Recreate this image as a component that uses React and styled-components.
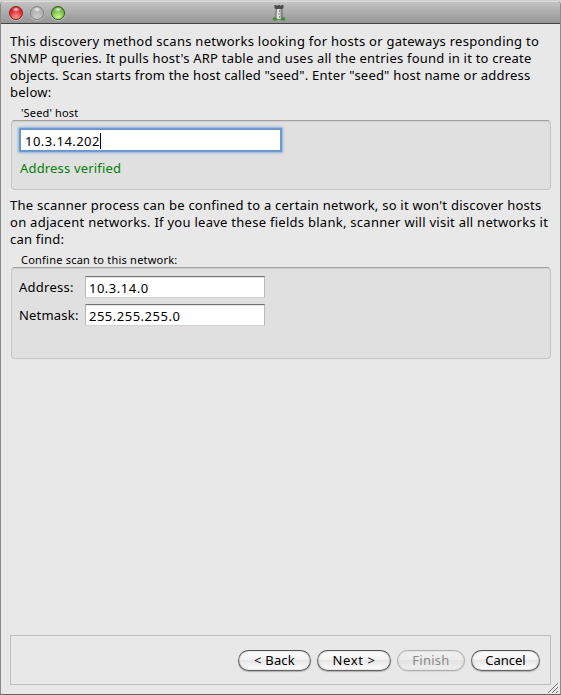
import React from 'react';
import styled, { createGlobalStyle } from 'styled-components';

const GlobalStyle = createGlobalStyle`
  * { box-sizing: border-box; }
  body { margin: 0; background: #d6d6d6; }
`;

const Window = styled.main`
  width: 561px;
  height: 695px;
  display: flex;
  flex-direction: column;
  border: 1px solid #8a8a8a;
  border-top-color: #d0d0d0;
  border-bottom-color: #626262;
  border-radius: 5px 5px 0 0;
  background: #e8e8e8;
  overflow: hidden;
  color: #000;
  font: 13px/17px 'Noto Sans', sans-serif;
  position: relative;
`;

const TitleBar = styled.header`
  height: 23px;
  flex: none;
  display: grid;
  grid-template-columns: 271px 14px 1fr;
  align-items: center;
  border-top: 1px solid #dcdcdc;
  border-bottom: 1px solid #444;
  background: linear-gradient(#c3c3c3, #969696);
`;

const Lights = styled.div`
  display: flex;
  gap: 7px;
  padding-left: 8px;
`;

const lightColors = {
  red: ['#7d2222', '#e2262c', '#ff9a98', '#c9151c'],
  gray: ['#858585', '#b0b0b0', '#cdcdcd', '#a5a5a5'],
  green: ['#2f5a1c', '#74bd48', '#d0f88c', '#418a22'],
};

const Light = styled.span`
  width: 14px;
  height: 14px;
  border-radius: 50%;
  border: 1px solid ${(p) => lightColors[p.$tone][0]};
  background:
    radial-gradient(ellipse 4px 2.5px at 50% 20%, rgba(255,255,255,.85), rgba(255,255,255,0)),
    radial-gradient(circle at 50% 85%, ${(p) => lightColors[p.$tone][2]}, ${(p) => lightColors[p.$tone][1]} 60%, ${(p) => lightColors[p.$tone][3]});
  box-shadow: 0 1px 0 rgba(255,255,255,.35);
`;

const Body = styled.section`
  flex: 1;
  display: flex;
  flex-direction: column;
  padding: 9px;
`;

const Paragraph = styled.p`
  margin: ${(p) => p.$top || 0}px 0 0;
`;

const Line = styled.span`
  display: block;
  white-space: nowrap;
  letter-spacing: ${(p) => p.$track || 0}px;
`;

const GroupTitle = styled.h2`
  margin: 3px 0 0 11px;
  height: 16px;
  font: 11px/18px 'Noto Sans', sans-serif;
  white-space: nowrap;
  letter-spacing: ${(p) => p.$track || 0}px;
`;

const Group = styled.div`
  flex: none;
  margin: 0 0 0 1px;
  width: 540px;
  height: ${(p) => p.$height}px;
  border: 1px solid #c6c6c6;
  border-top-color: #a2a2a2;
  border-radius: 4px;
  background: #e0e0e0;
  box-shadow: inset 0 1px 1px #d0d0d0;
`;

const SeedField = styled.div`
  width: 261px;
  height: 22px;
  margin: 8px 0 0 8px;
  display: flex;
  align-items: center;
  padding: 2px 0 0 4px;
  background: #fff;
  border: 1px solid #6b94c8;
  box-shadow: 0 0 0 1px #6f9bd3, 0 0 2px 2px #8db2e0;
`;

const Caret = styled.span`
  width: 1px;
  height: 16px;
  background: #000;
`;

const Status = styled.div`
  margin: 9px 0 0 8px;
  color: #008000;
`;

const Form = styled.div`
  display: grid;
  grid-template-columns: 66px 180px;
  grid-auto-rows: 22px;
  row-gap: 6px;
  align-items: center;
  padding: 8px 0 0 7px;
`;

const Label = styled(Line)`
  padding-top: 1px;
`;

const Field = styled.div`
  height: 22px;
  padding: 3px 0 0 3px;
  background: #fff;
  border: 1px solid #b8b8b8;
  border-top-color: #737373;
  border-bottom-color: #d2d2d2;
  box-shadow: inset 0 1px 0 #e5e5e5;
`;

const Footer = styled.footer`
  width: 541px;
  height: 50px;
  margin-top: auto;
  border: 1px solid #bdbdbd;
  display: flex;
  justify-content: flex-end;
  align-items: center;
  gap: 6px;
  padding-right: 10px;
`;

const Button = styled.button`
  width: ${(p) => p.$width}px;
  height: 21px;
  padding: 0;
  border: 1px solid #646464;
  border-top-color: #505050;
  border-radius: 11px;
  background: linear-gradient(#fff, #f2f2f2 45%, #e6e6e6 50%, #fff);
  box-shadow: 0 1px 1px rgba(0,0,0,.25), inset 0 0 2px #aaa;
  color: #000;
  font: 13px/17px 'Noto Sans', sans-serif;
  letter-spacing: ${(p) => p.$track || 0}px;
  white-space: nowrap;

  &:disabled {
    border-color: #adadad;
    color: #8b8b8b;
    background: linear-gradient(#f1f1f1, #ebebeb 45%, #e3e3e3 50%, #f0f0f0);
    box-shadow: 0 1px 1px rgba(0,0,0,.08), inset 0 0 2px #ccc;
  }
`;

const ResizeGrip = styled.svg`
  position: absolute;
  right: 1px;
  bottom: 0;
`;

function TowerIcon() {
  return (
    <svg width="14" height="18" viewBox="0 0 14 18">
      <path d="M3.5 5H10.5L11.5 16H2.5Z" fill="#858585" />
      <path d="M5 5H8.5V15H4.5Z" fill="#e2e2e2" />
      <path d="M2.5 1H4.7V2H5.7V1H8.3V2H9.3V1H11.5V4L10.5 5H3.5L2.5 4Z" fill="#4c4c4c" />
      <path d="M7.5 6V8M6 10H8M7.5 12V14" stroke="#888" />
      <ellipse cx="3" cy="15" rx="2.2" ry="1.8" fill="#3f8f2a" />
      <ellipse cx="11.2" cy="15" rx="2.2" ry="1.8" fill="#3f8f2a" />
    </svg>
  );
}

export default function App() {
  return (
    <>
      <GlobalStyle />
      <Window>
        <TitleBar>
          <Lights>
            <Light $tone="red" />
            <Light $tone="gray" />
            <Light $tone="green" />
          </Lights>
          <TowerIcon />
        </TitleBar>
        <Body>
          <Paragraph>
            <Line $track={0.27}>This discovery method scans networks looking for hosts or gateways responding to</Line>
            <Line $track={0.22}>SNMP queries. It pulls host's ARP table and uses all the entries found in it to create</Line>
            <Line $track={0.2}>objects. Scan starts from the host called "seed". Enter "seed" host name or address</Line>
            <Line $track={0.26}>below:</Line>
          </Paragraph>
          <GroupTitle $track={0.15}>'Seed' host</GroupTitle>
          <Group $height={70}>
            <SeedField><Line $track={0.45}>10.3.14.202</Line><Caret /></SeedField>
            <Status><Line $track={0.17}>Address verified</Line></Status>
          </Group>
          <Paragraph $top={7}>
            <Line $track={0.24}>The scanner process can be confined to a certain network, so it won't discover hosts</Line>
            <Line $track={0.27}>on adjacent networks. If you leave these fields blank, scanner will visit all networks it</Line>
            <Line $track={0.2}>can find:</Line>
          </Paragraph>
          <GroupTitle $track={0.22}>Confine scan to this network:</GroupTitle>
          <Group $height={92}>
            <Form>
              <Label $track={0.25}>Address:</Label>
              <Field><Line $track={0.5}>10.3.14.0</Line></Field>
              <Label $track={0.2}>Netmask:</Label>
              <Field><Line $track={0.5}>255.255.255.0</Line></Field>
            </Form>
          </Group>
          <Footer>
            <Button $width={73} $track={0.2}>&lt; Back</Button>
            <Button $width={74} $track={0.6}>Next &gt;</Button>
            <Button $width={68} $track={0.25} disabled>Finish</Button>
            <Button $width={69}>Cancel</Button>
          </Footer>
        </Body>
        <ResizeGrip width="12" height="12" viewBox="0 0 12 12">
          <path d="M1 11L11 1M5 11L11 5M9 11L11 9" stroke="#777" />
        </ResizeGrip>
      </Window>
    </>
  );
}
